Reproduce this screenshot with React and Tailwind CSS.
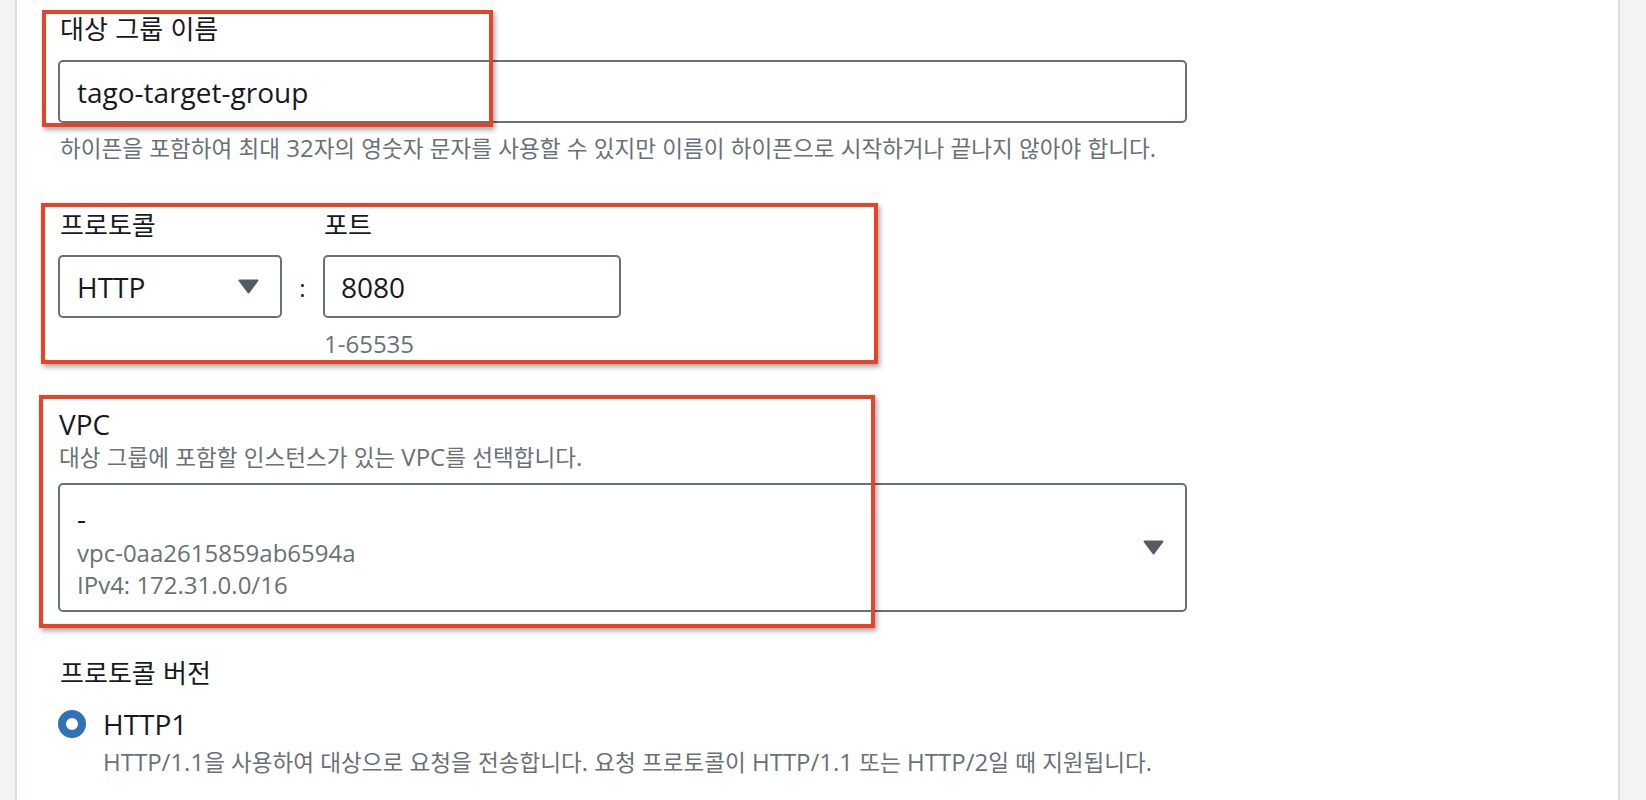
import React from "react";

const HANGUL = /([\uAC00-\uD7A3\u3131-\u318E]+)/;

function K({ t }) {
  return t.split(HANGUL).map((s, i) =>
    HANGUL.test(s) ? (
      <span key={i} className="text-[0.93em]">
        {s}
      </span>
    ) : (
      <React.Fragment key={i}>{s}</React.Fragment>
    )
  );
}

function KH({ t }) {
  return t.split(HANGUL).map((s, i) =>
    HANGUL.test(s) ? (
      <span key={i} className="text-[0.94em]">
        {s}
      </span>
    ) : (
      <React.Fragment key={i}>{s}</React.Fragment>
    )
  );
}

function Caret() {
  return (
    <svg width="21" height="15" viewBox="0 0 21 15" className="block">
      <polygon
        points="1.5,1.5 19.5,1.5 10.5,13.5"
        fill="#545b64"
        stroke="#545b64"
        strokeWidth="2"
        strokeLinejoin="round"
      />
    </svg>
  );
}

export default function App() {
  return (
    <div className="relative min-h-[800px] w-full bg-[#f2f3f3] font-['Open_Sans','Noto_Sans_CJK_KR',sans-serif] overflow-hidden">
      <div className="ml-[15px] w-[1605px] min-h-[800px] border-x-2 border-[#dcdfdf] bg-white pl-[41px]">
        <div className="w-[1129px]">
          {/* Section 1 */}
          <div className="pt-[12px]">
            <div className="pl-[2px] text-[28px] leading-[32px] text-[#16191f]">
              <K t="대상 그룹 이름" />
            </div>
            <div className="mt-[15px] flex h-[63px] items-center rounded-[5px] border-2 border-[#687078] pl-[17px] text-[28px] text-[#16191f]">
              tago-target-group
            </div>
            <div className="mt-[10px] pl-[2px] text-[24px] leading-[30px] text-[#687078]">
              <KH t="하이픈을 포함하여 최대 32자의 영숫자 문자를 사용할 수 있지만 이름이 하이픈으로 시작하거나 끝나지 않아야 합니다." />
            </div>
          </div>

          {/* Section 2 */}
          <div className="mt-[44px] flex items-start">
            <div className="w-[224px]">
              <div className="pl-[2px] text-[28px] leading-[32px] text-[#16191f]">
                <K t="프로토콜" />
              </div>
              <div className="mt-[14px] flex h-[63px] items-center justify-between rounded-[5px] border-2 border-[#687078] pl-[17px] pr-[21px] text-[28px] text-[#16191f]">
                <span>HTTP</span>
                <Caret />
              </div>
            </div>
            <div className="mt-[46px] flex h-[63px] w-[41px] items-center justify-center pt-[4px] text-[24px] text-[#16191f]">
              :
            </div>
            <div className="w-[298px]">
              <div className="pl-[1px] text-[28px] leading-[32px] text-[#16191f]">
                <K t="포트" />
              </div>
              <div className="mt-[14px] flex h-[63px] items-center rounded-[5px] border-2 border-[#687078] pl-[16px] text-[28px] text-[#16191f]">
                8080
              </div>
              <div className="mt-[11px] pl-[1px] text-[24px] leading-[30px] text-[#687078]">
                1-65535
              </div>
            </div>
          </div>

          {/* Section 3 */}
          <div className="mt-[49px]">
            <div className="pl-[1px] text-[28px] leading-[32px] text-[#16191f]">VPC</div>
            <div className="mt-[2px] pl-[1px] text-[24px] leading-[30px] text-[#687078]">
              <KH t="대상 그룹에 포함할 인스턴스가 있는 VPC를 선택합니다." />
            </div>
            <div className="mt-[10px] flex h-[129px] items-center justify-between rounded-[5px] border-2 border-[#687078] pl-[17px] pr-[21px]">
              <div className="self-start pt-[17px]">
                <div className="text-[28px] leading-[32px] text-[#16191f]">-</div>
                <div className="mt-[3px] text-[24px] leading-[32px] text-[#687078]">
                  vpc-0aa2615859ab6594a
                </div>
                <div className="text-[24px] leading-[32px] text-[#687078]">
                  IPv4: 172.31.0.0/16
                </div>
              </div>
              <Caret />
            </div>
          </div>

          {/* Section 4 */}
          <div className="mt-[44px]">
            <div className="pl-[2px] text-[28px] leading-[32px] text-[#16191f]">
              <K t="프로토콜 버전" />
            </div>
            <div className="mt-[19px] flex h-[32px] items-center">
              <div className="h-[28px] w-[28px] rounded-full border-[8px] border-[#2f72b7] bg-white" />
              <div className="ml-[17px] text-[28px] leading-[32px] text-[#16191f]">HTTP1</div>
            </div>
            <div className="mt-[7px] pl-[45px] text-[24px] leading-[30px] text-[#687078]">
              <KH t="HTTP/1.1을 사용하여 대상으로 요청을 전송합니다. 요청 프로토콜이 HTTP/1.1 또는 HTTP/2일 때 지원됩니다." />
            </div>
          </div>
        </div>
      </div>

      {/* Annotation boxes */}
      <div className="pointer-events-none absolute left-[42px] top-[10px] h-[117px] w-[451px] border-4 border-[#e6432b] shadow-[2px_3px_5px_rgba(0,0,0,0.35)]" />
      <div className="pointer-events-none absolute left-[41px] top-[203px] h-[161px] w-[837px] border-4 border-[#e6432b] shadow-[2px_3px_5px_rgba(0,0,0,0.35)]" />
      <div className="pointer-events-none absolute left-[39px] top-[395px] h-[233px] w-[836px] border-4 border-[#e6432b] shadow-[2px_3px_5px_rgba(0,0,0,0.35)]" />
    </div>
  );
}
